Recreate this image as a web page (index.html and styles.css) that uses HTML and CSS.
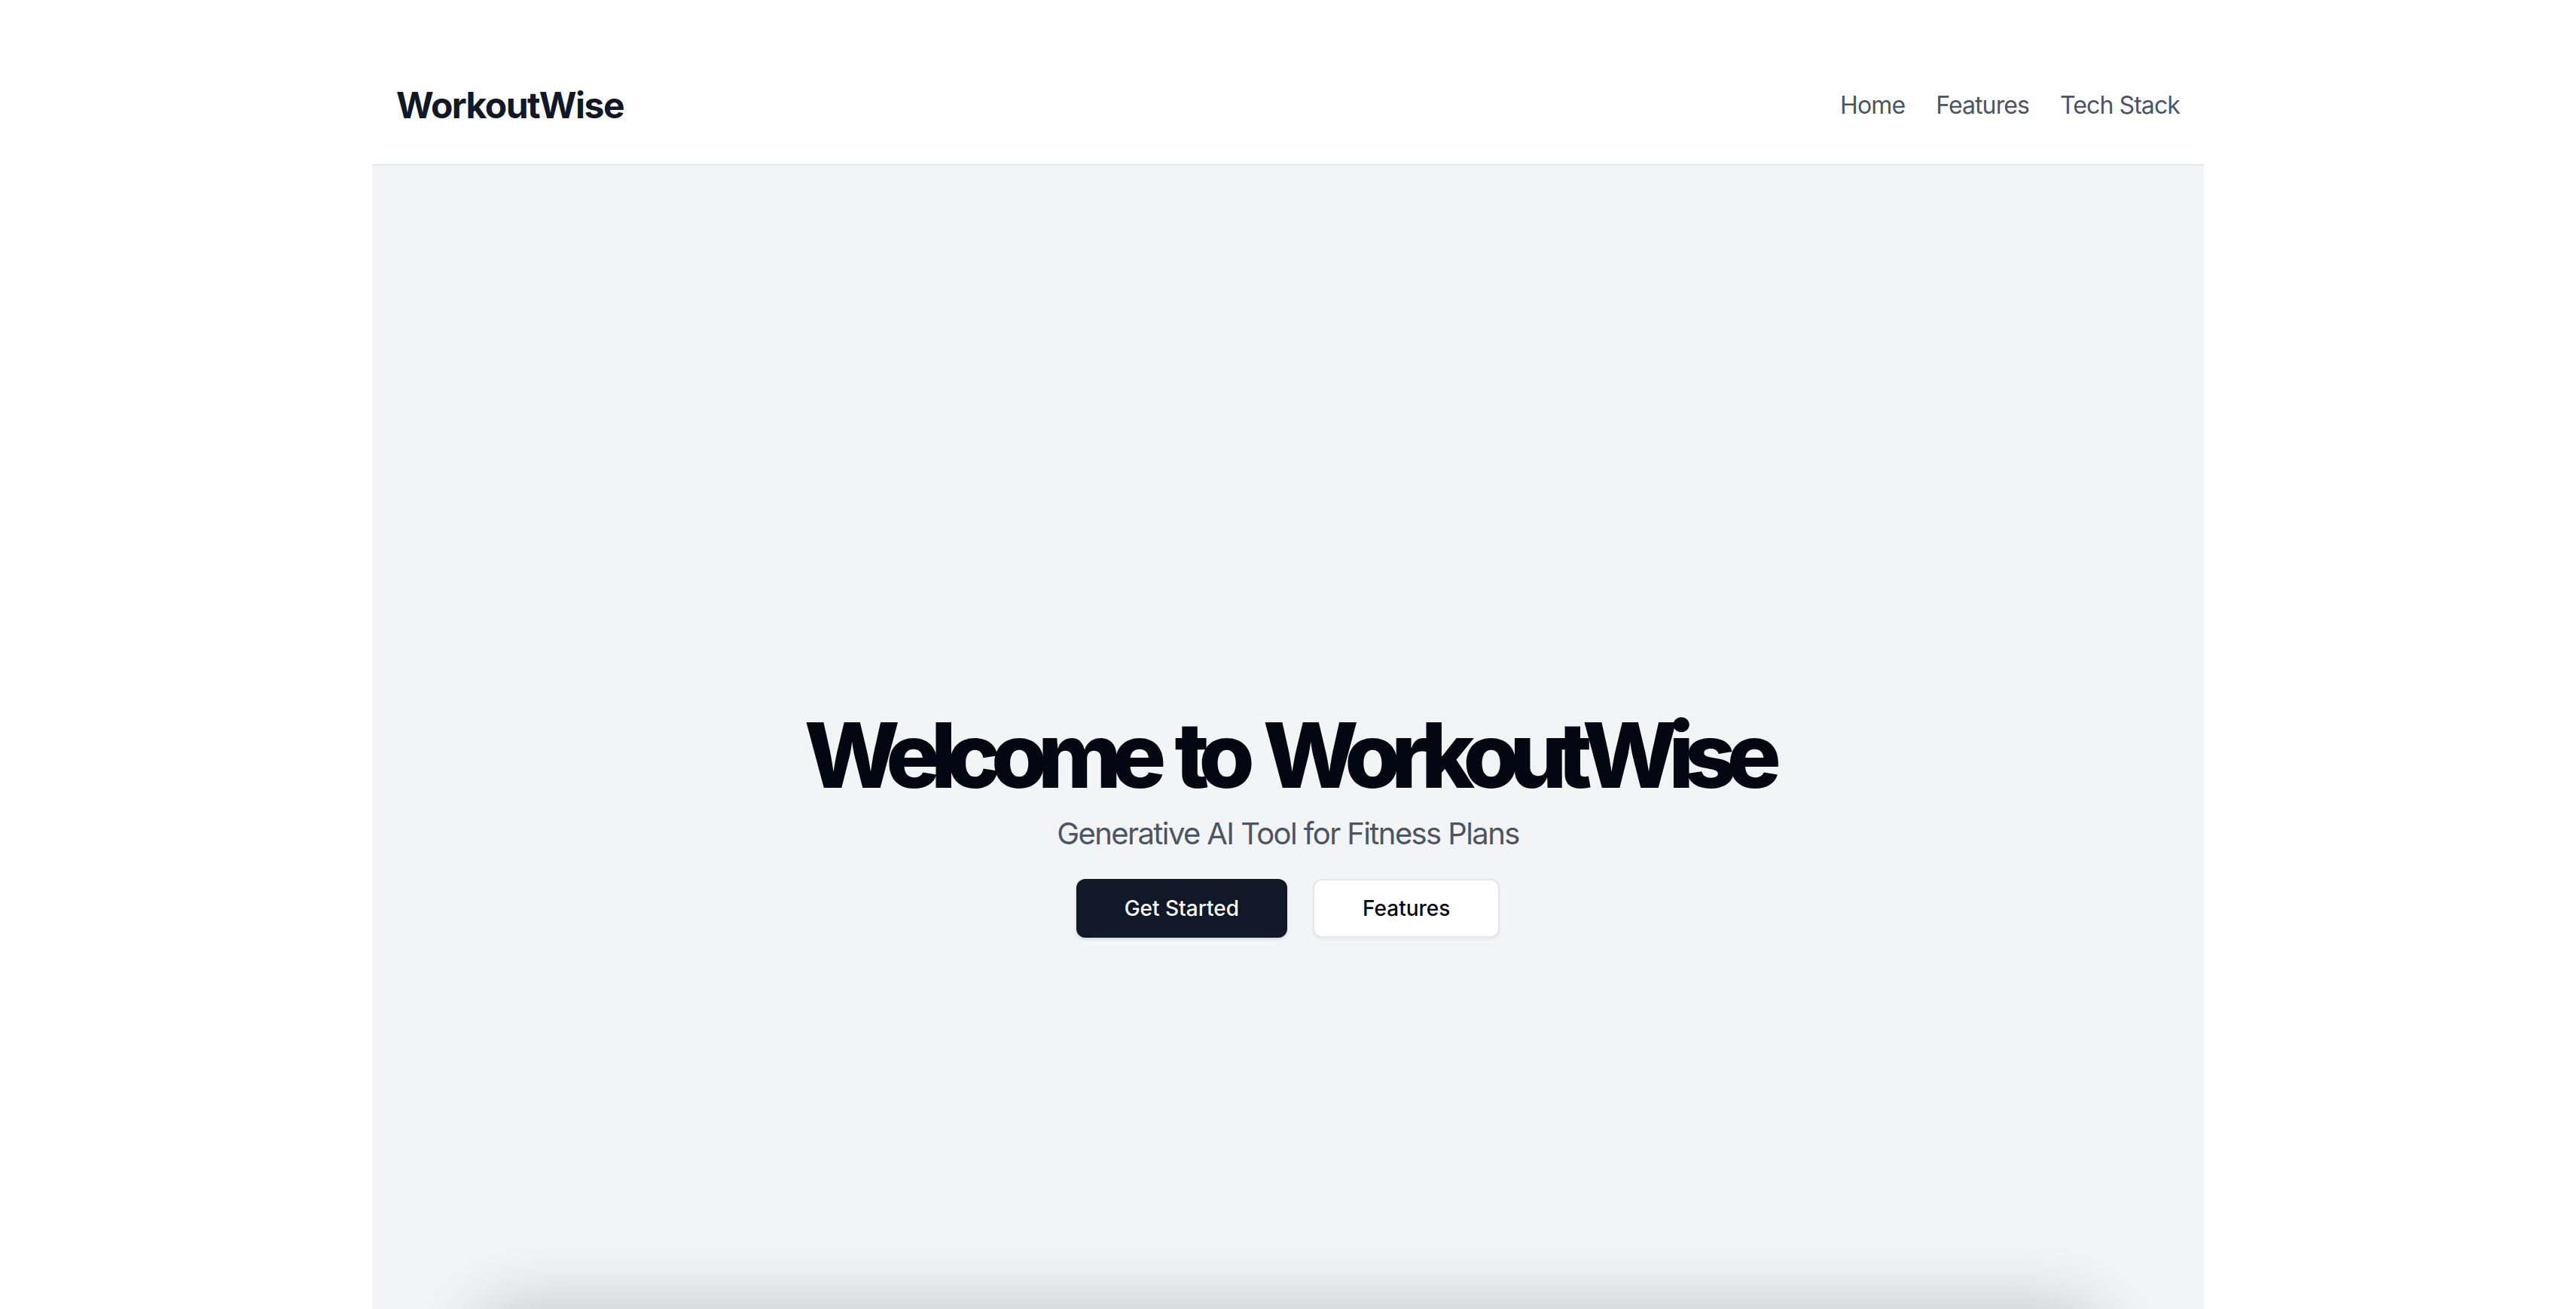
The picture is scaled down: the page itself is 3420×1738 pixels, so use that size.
FILE: index.html
```html
<!DOCTYPE html>
<html lang="en">
<head>
<meta charset="utf-8">
<title>WorkoutWise</title>
<link rel="stylesheet" href="styles.css">
</head>
<body>
<div class="page">
  <header class="site-header">
    <a class="logo" href="#">WorkoutWise</a>
    <nav class="nav">
      <a href="#">Home</a>
      <a href="#">Features</a>
      <a href="#">Tech Stack</a>
    </nav>
  </header>
  <main class="hero">
    <div class="hero-content">
      <h1 class="hero-title">Welcome to WorkoutWise</h1>
      <p class="hero-subtitle">Generative AI Tool for Fitness Plans</p>
      <div class="actions">
        <a class="btn btn-primary" href="#">Get Started</a>
        <a class="btn btn-outline" href="#">Features</a>
      </div>
    </div>
    <div class="preview"></div>
  </main>
</div>
</body>
</html>
```
FILE: styles.css
```css
html, body {
  margin: 0;
  padding: 0;
  height: 100%;
  overflow: hidden;
  background: #ffffff;
  font-family: Inter, "Noto Sans", "Liberation Sans", sans-serif;
}

a {
  text-decoration: none;
  color: inherit;
}

.page {
  max-width: 2432px;
  margin: 0 auto;
  padding-top: 60px;
}

.site-header {
  height: 158px;
  border-bottom: 2px solid #e5e7eb;
  display: flex;
  align-items: center;
  justify-content: space-between;
  padding: 0 32px;
}

.logo {
  font-size: 48px;
  font-weight: 700;
  letter-spacing: -0.032em;
  color: #111827;
}

.nav {
  display: flex;
  gap: 41px;
}

.nav a {
  font-size: 32px;
  font-weight: 400;
  letter-spacing: -0.9px;
  color: #4b5563;
}

.hero {
  background: #f3f4f6;
  padding-top: 723px;
}

.hero-content {
  display: flex;
  flex-direction: column;
  align-items: center;
  text-align: center;
}

.hero-title {
  margin: 0;
  font-size: 120px;
  line-height: 1;
  font-weight: 800;
  letter-spacing: -0.105em;
  word-spacing: 10px;
  color: #030712;
}

.hero-subtitle {
  margin: 16px 0 0;
  font-size: 40px;
  line-height: 56px;
  letter-spacing: -1.6px;
  color: #4b5563;
}

.actions {
  margin-top: 32px;
  display: flex;
  gap: 34px;
}

.btn {
  box-sizing: border-box;
  height: 78px;
  padding: 0 64px;
  border-radius: 12px;
  font-size: 28px;
  font-weight: 500;
  display: inline-flex;
  align-items: center;
  justify-content: center;
}

.btn-primary {
  background: #111827;
  color: #f9fafb;
  box-shadow: 0 2px 4px rgba(0, 0, 0, 0.12);
}

.btn-outline {
  background: #ffffff;
  border: 2px solid #e5e7eb;
  color: #030712;
  box-shadow: 0 2px 4px rgba(0, 0, 0, 0.05);
}

.preview {
  width: 2140px;
  height: 1000px;
  margin: 500px auto 0;
  border-radius: 24px;
  background: #f3f4f6;
  box-shadow: 0 0 100px rgba(0, 0, 0, 0.24);
}
```
